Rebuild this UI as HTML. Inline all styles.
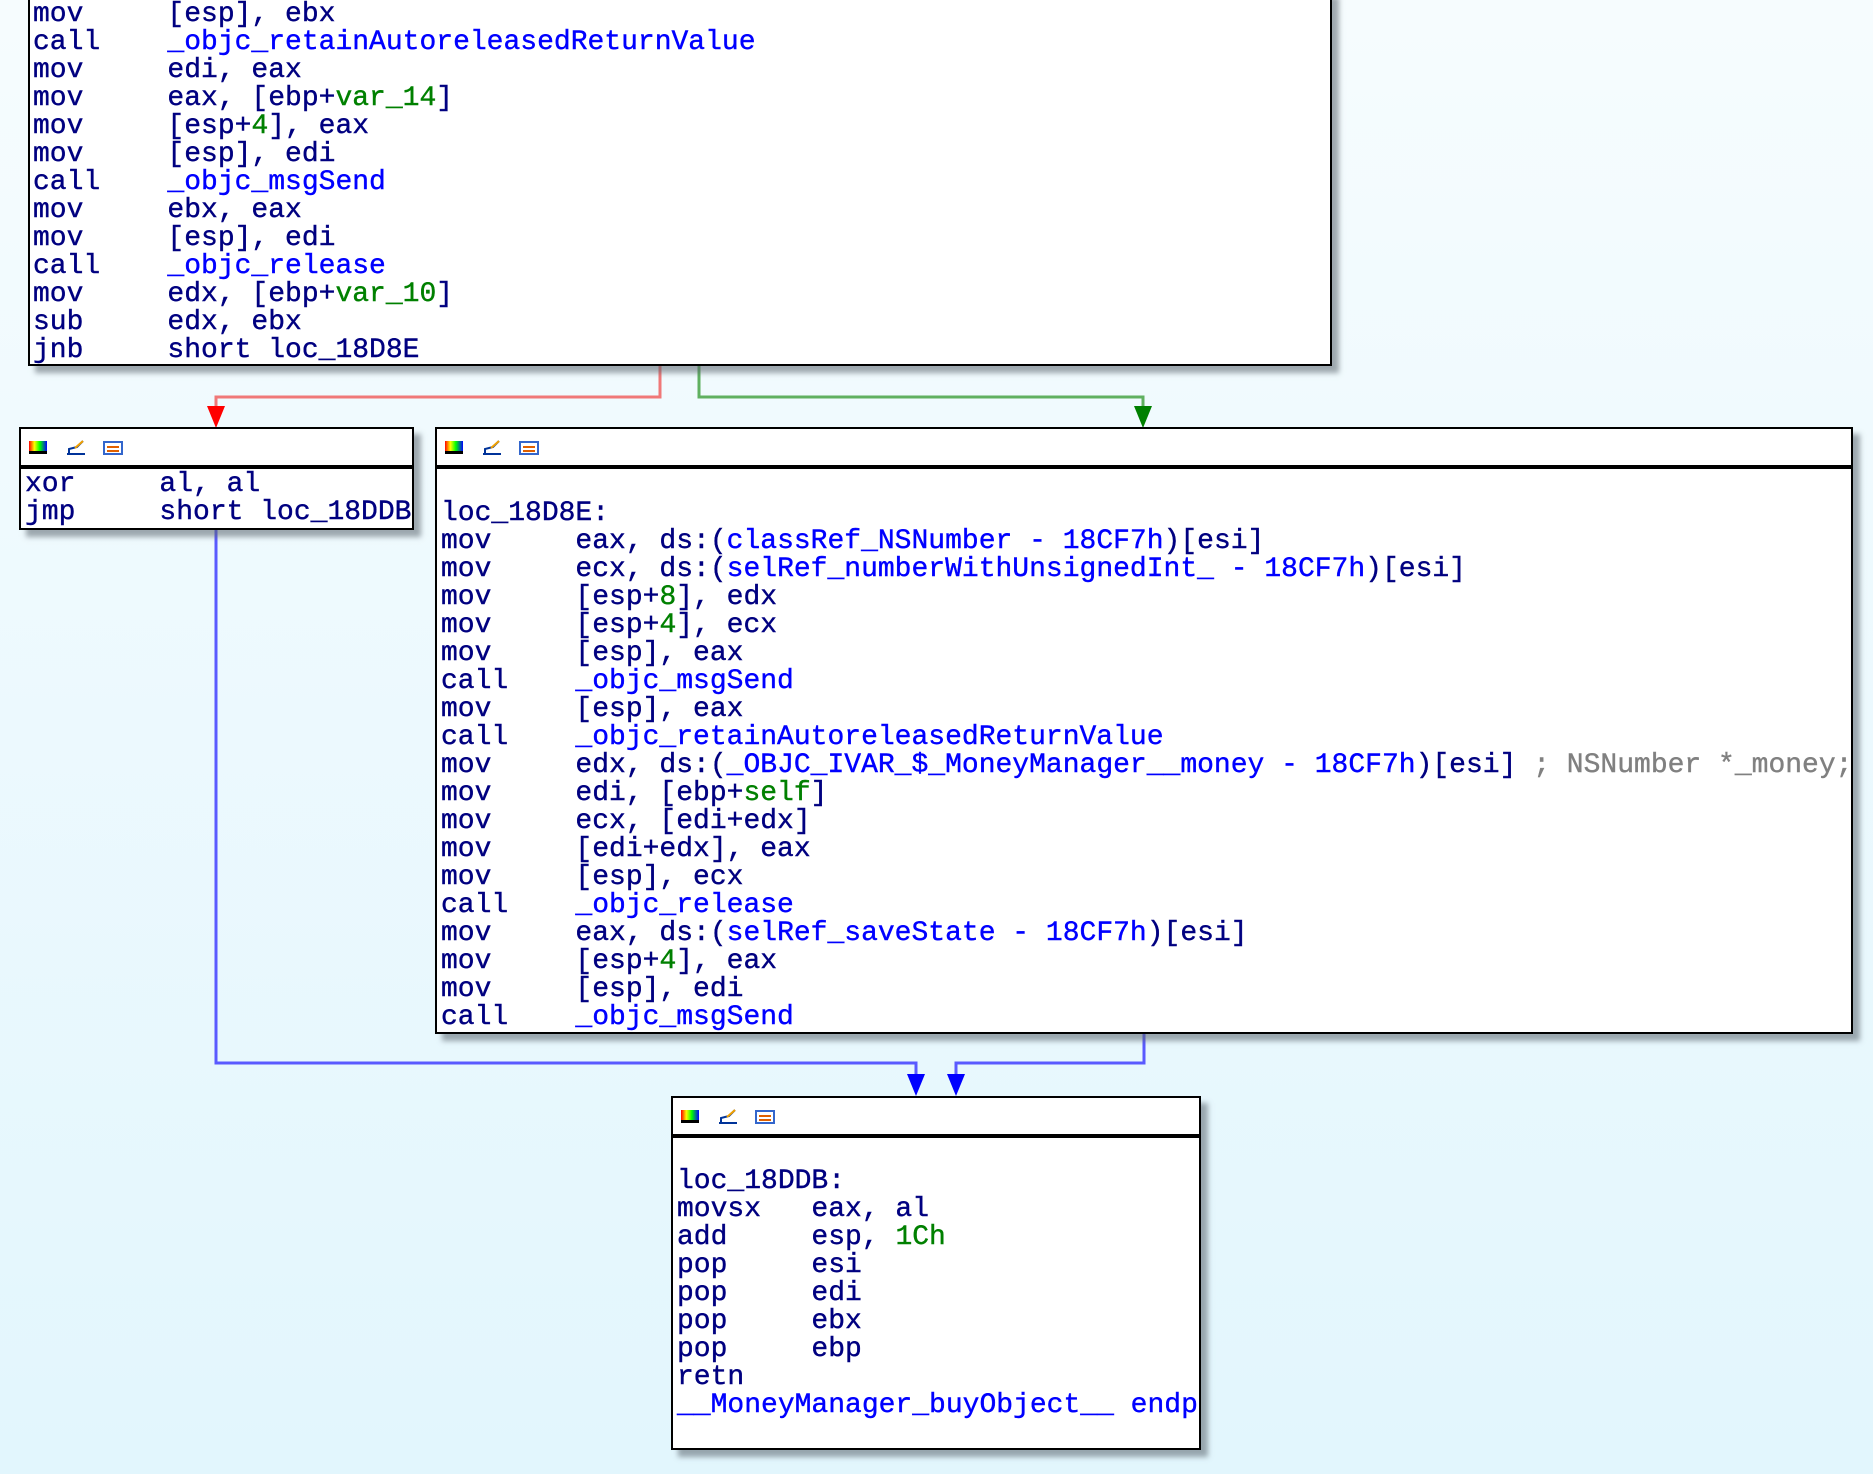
<!DOCTYPE html>
<html><head><meta charset="utf-8"><style>
html,body{margin:0;padding:0}
html{background:#e2f6fd}
body{width:1873px;height:1474px;position:relative;overflow:hidden;background:linear-gradient(#f6fcfe,#e2f6fd);font-family:"Liberation Mono","Courier New",monospace;font-size:28px;color:#000080;-webkit-text-stroke:0.4px}
.box{position:absolute;background:#fff;border:2.5px solid #000;box-shadow:7px 7px 5px rgba(90,100,110,.55);box-sizing:border-box}
.hdr{position:absolute;left:0;right:0;top:0;height:36px;border-bottom:4px solid #000}
.code{position:absolute;line-height:28px}
.code div{height:28px;white-space:pre}
.b{color:#0000ff}.g{color:#008000}.c{color:#808080}
.ic{position:absolute;top:10px}
</style></head><body>
<svg width="1873" height="1474" style="position:absolute;left:0;top:0">
<polyline points="660,365 660,397 216,397 216,415" fill="none" stroke="#f07878" stroke-width="3"/>
<polygon points="207,406 225,406 216,428" fill="#ff0000"/>
<polyline points="699,365 699,397 1143,397 1143,415" fill="none" stroke="#60b060" stroke-width="3"/>
<polygon points="1134,406 1152,406 1143,428" fill="#008000"/>
<polyline points="216,530 216,1063 916,1063 916,1084" fill="none" stroke="#5a5aff" stroke-width="3"/>
<polygon points="907,1074 925,1074 916,1096" fill="#0000ff"/>
<polyline points="1144,1034 1144,1063 956,1063 956,1084" fill="none" stroke="#5a5aff" stroke-width="3"/>
<polygon points="947,1074 965,1074 956,1096" fill="#0000ff"/>
</svg>

<div class="box" style="left:28px;top:-10px;width:1304px;height:376px">
<div class="code" style="left:3px;top:9px"><div>mov     [esp], ebx</div><div>call    <span class="b">_objc_retainAutoreleasedReturnValue</span></div><div>mov     edi, eax</div><div>mov     eax, [ebp+<span class="g">var_14</span>]</div><div>mov     [esp+<span class="g">4</span>], eax</div><div>mov     [esp], edi</div><div>call    <span class="b">_objc_msgSend</span></div><div>mov     ebx, eax</div><div>mov     [esp], edi</div><div>call    <span class="b">_objc_release</span></div><div>mov     edx, [ebp+<span class="g">var_10</span>]</div><div>sub     edx, ebx</div><div>jnb     short loc_18D8E</div></div></div>

<div class="box" style="left:19px;top:427px;width:395px;height:103px">
<div class="hdr"></div>
<svg class="ic" width="120" height="18" style="left:8px"><defs><linearGradient id="r" x1="0" x2="1"><stop offset="0" stop-color="#f00"/><stop offset=".3" stop-color="#ff0"/><stop offset=".6" stop-color="#0f0"/><stop offset="1" stop-color="#00f"/></linearGradient></defs><rect x="0" y="2" width="18" height="13" fill="url(#r)"/><rect x="0" y="12" width="18" height="3" fill="#000"/><path d="M38 15h18M40 15v-5l8 -2 6-6" stroke="#003399" stroke-width="2" fill="none"/><path d="M46 9l8-7" stroke="#f0a000" stroke-width="2"/><rect x="75" y="3" width="18" height="12" fill="#fff" stroke="#3366cc" stroke-width="2"/><path d="M78 8h12M78 12h12" stroke="#e06000" stroke-width="2"/></svg>
<div class="code" style="left:4px;top:42px"><div>xor     al, al</div><div>jmp     short loc_18DDB</div></div></div>

<div class="box" style="left:435px;top:427px;width:1418px;height:607px">
<div class="hdr"></div>
<svg class="ic" width="120" height="18" style="left:8px"><rect x="0" y="2" width="18" height="13" fill="url(#r)"/><rect x="0" y="12" width="18" height="3" fill="#000"/><path d="M38 15h18M40 15v-5l8 -2 6-6" stroke="#003399" stroke-width="2" fill="none"/><path d="M46 9l8-7" stroke="#f0a000" stroke-width="2"/><rect x="75" y="3" width="18" height="12" fill="#fff" stroke="#3366cc" stroke-width="2"/><path d="M78 8h12M78 12h12" stroke="#e06000" stroke-width="2"/></svg>
<div class="code" style="left:4px;top:71px"><div>loc_18D8E:</div><div>mov     eax, ds:(<span class="b">classRef_NSNumber - 18CF7h</span>)[esi]</div><div>mov     ecx, ds:(<span class="b">selRef_numberWithUnsignedInt_ - 18CF7h</span>)[esi]</div><div>mov     [esp+<span class="g">8</span>], edx</div><div>mov     [esp+<span class="g">4</span>], ecx</div><div>mov     [esp], eax</div><div>call    <span class="b">_objc_msgSend</span></div><div>mov     [esp], eax</div><div>call    <span class="b">_objc_retainAutoreleasedReturnValue</span></div><div>mov     edx, ds:(<span class="b">_OBJC_IVAR_$_MoneyManager__money - 18CF7h</span>)[esi] <span class="c">; NSNumber *_money;</span></div><div>mov     edi, [ebp+<span class="g">self</span>]</div><div>mov     ecx, [edi+edx]</div><div>mov     [edi+edx], eax</div><div>mov     [esp], ecx</div><div>call    <span class="b">_objc_release</span></div><div>mov     eax, ds:(<span class="b">selRef_saveState - 18CF7h</span>)[esi]</div><div>mov     [esp+<span class="g">4</span>], eax</div><div>mov     [esp], edi</div><div>call    <span class="b">_objc_msgSend</span></div></div></div>

<div class="box" style="left:671px;top:1096px;width:530px;height:354px">
<div class="hdr"></div>
<svg class="ic" width="120" height="18" style="left:8px"><rect x="0" y="2" width="18" height="13" fill="url(#r)"/><rect x="0" y="12" width="18" height="3" fill="#000"/><path d="M38 15h18M40 15v-5l8 -2 6-6" stroke="#003399" stroke-width="2" fill="none"/><path d="M46 9l8-7" stroke="#f0a000" stroke-width="2"/><rect x="75" y="3" width="18" height="12" fill="#fff" stroke="#3366cc" stroke-width="2"/><path d="M78 8h12M78 12h12" stroke="#e06000" stroke-width="2"/></svg>
<div class="code" style="left:4px;top:70px"><div>loc_18DDB:</div><div>movsx   eax, al</div><div>add     esp, <span class="g">1Ch</span></div><div>pop     esi</div><div>pop     edi</div><div>pop     ebx</div><div>pop     ebp</div><div>retn</div><div class="b">__MoneyManager_buyObject__ endp</div></div></div>
</body></html>
